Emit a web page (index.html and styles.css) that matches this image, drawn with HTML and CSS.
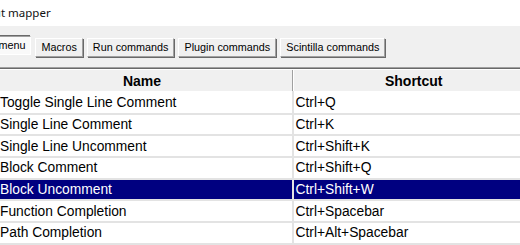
FILE: index.html
```html
<!DOCTYPE html>
<html lang="en">
<head>
    <meta charset="UTF-8">
    <title>Shortcut mapper</title>
    <link rel="stylesheet" href="styles.css">
</head>
<body>
    <div class="window">
        <div class="caption">Shortcut mapper</div>

        <div class="client">
            <div class="tabs">
                <span class="tab selected">Main menu</span>
                <span class="tab">Macros</span>
                <span class="tab">Run commands</span>
                <span class="tab">Plugin commands</span>
                <span class="tab">Scintilla commands</span>
            </div>

            <div class="grid">
                <table>
                    <thead>
                        <tr>
                            <th class="col-name">Name</th>
                            <th class="col-key">Shortcut</th>
                        </tr>
                    </thead>
                    <tbody>
                        <tr><td>Toggle Single Line Comment</td><td>Ctrl+Q</td></tr>
                        <tr><td>Single Line Comment</td><td>Ctrl+K</td></tr>
                        <tr><td>Single Line Uncomment</td><td>Ctrl+Shift+K</td></tr>
                        <tr><td>Block Comment</td><td>Ctrl+Shift+Q</td></tr>
                        <tr class="active"><td>Block Uncomment</td><td>Ctrl+Shift+W</td></tr>
                        <tr><td>Function Completion</td><td>Ctrl+Spacebar</td></tr>
                        <tr><td>Path Completion</td><td>Ctrl+Alt+Spacebar</td></tr>
                    </tbody>
                </table>
            </div>
        </div>
    </div>
</body>
</html>
```

FILE: styles.css
```css
body {
    margin: 0;
    width: 520px;
    height: 245px;
    overflow: hidden;
    background-color: #f0f0f0;
    font-family: 'Liberation Sans', Arial, sans-serif;
    color: #000;
}
.window {
    margin-left: -36px;
    width: 600px;
}
.caption {
    height: 26px;
    line-height: 26px;
    background-color: #fff;
    font-family: 'Noto Sans', sans-serif;
    font-size: 11.5px;
    text-indent: -5px;
    color: #111;
}
.client {
    background-color: #f0f0f0;
}
.tabs {
    display: flex;
    gap: 4px;
    padding: 12px 0 0 2px;
    height: 29px;
    align-items: flex-start;
}
.tab {
    font-size: 10.8px;
    height: 17px;
    line-height: 17px;
    padding: 0 5px;
    background-color: #f0f0f0;
    border: 1px solid;
    border-color: #fff #a0a0a0 #a0a0a0 #fff;
    box-shadow: 1px 1px 0 #696969;
}
.tab.selected {
    margin-top: -2px;
    background-color: #f9f9f9;
    border-color: #a0a0a0 #fff #fff #a0a0a0;
    box-shadow: -1px -1px 0 #696969;
}
.grid {
    margin-left: 28px;
    border-top: 1px solid #a0a0a0;
    box-shadow: inset 0 1px 0 #696969;
    padding-top: 2px;
    background-color: #fff;
}
table {
    border-collapse: collapse;
    width: 544px;
    table-layout: fixed;
}
th {
    height: 21px;
    padding: 0;
    font-size: 14px;
    font-weight: bold;
    text-align: center;
    background-color: #f0f0f0;
    border-bottom: 1px solid #a0a0a0;
    border-right: 1px solid #a0a0a0;
    box-shadow: inset 1px 0 0 #fff;
}
.col-name {
    width: 300px;
}
td {
    height: 19.67px;
    padding: 0 0 0 2px;
    font-size: 13.8px;
    white-space: nowrap;
    border-bottom: 2px solid #e3e3e3;
    border-right: 2px solid #e3e3e3;
    background-color: #fff;
}
td:first-child {
    padding-left: 8px;
}
tbody tr:first-child td {
    border-top: 2px solid #fff;
}
tr.active td {
    background-color: #000080;
    color: #fff;
}
```
